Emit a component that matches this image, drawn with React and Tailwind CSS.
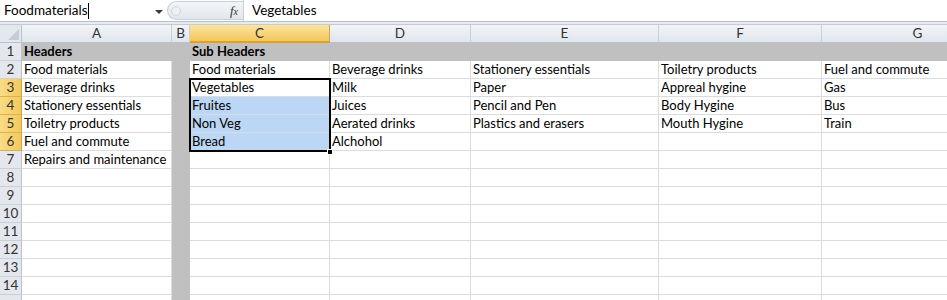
import React from "react";

const COLS = ["A", "B", "C", "D", "E", "F", "G"];

// sheet contents, row by row (A..G)
const DATA = [
  ["Headers", "", "Sub Headers", "", "", "", ""],
  ["Food materials", "", "Food materials", "Beverage drinks", "Stationery essentials", "Toiletry products", "Fuel and commute"],
  ["Beverage drinks", "", "Vegetables", "Milk", "Paper", "Appreal hygine", "Gas"],
  ["Stationery essentials", "", "Fruites", "Juices", "Pencil and Pen", "Body Hygine", "Bus"],
  ["Toiletry products", "", "Non Veg", "Aerated drinks", "Plastics and erasers", "Mouth Hygine", "Train"],
  ["Fuel and commute", "", "Bread", "Alchohol", "", "", ""],
  ["Repairs and maintenance", "", "", "", "", "", ""],
];

const ROW_COUNT = 15;

function cellClass(r, c) {
  // r is 1-based row, c is 0-based column index
  if (r === 1 || c === 1) return "bg-[#c0c0c0] border-[#c0c0c0]";
  if (c === 2 && r >= 4 && r <= 6) return "bg-[#bcd7f5] border-[#d4dde8]";
  return "bg-white border-[#dadcdd]";
}

export default function App() {
  const rows = Array.from({ length: ROW_COUNT }, (_, i) => i + 1);

  return (
    <div className="w-[947px] h-[300px] overflow-hidden bg-white text-[13px] text-black font-['Lato','Liberation_Sans',sans-serif]">
      {/* formula bar */}
      <div className="flex h-[22px] border-b border-[#b6bec9] bg-white">
        <div className="relative flex w-[167px] shrink-0 items-center pl-[4px] text-[13.5px]">
          <span>Foodmaterials</span>
          <span className="ml-px h-[16px] w-px bg-black" />
          <span className="absolute left-[155px] top-[10px] h-0 w-0 border-x-[4px] border-t-[4px] border-x-transparent border-t-[#3b3b3b]" />
        </div>
        <div className="my-px flex w-[76px] shrink-0 items-center rounded-l-full border border-r-0 border-[#c9cfd7] bg-gradient-to-b from-[#f3f5f8] to-[#e2e6eb] pl-[3px]">
          <span className="h-[10px] w-[10px] rounded-full border border-[#d3d7dd] bg-[#eef0f3]" />
          <span className="ml-auto mr-[5px] font-['Liberation_Serif',serif] text-[13px] italic text-[#333]">
            f<span className="text-[10px]">x</span>
          </span>
        </div>
        <div className="flex flex-1 items-center border-l border-[#c9cfd7] pl-[8px] text-[13.5px]">Vegetables</div>
      </div>
      <div className="h-[3px] border-b border-[#c4cbd4] bg-[#e8ecf0]" />

      {/* sheet */}
      <div className="relative">
        <div className="grid w-[1014px] grid-cols-[22px_150px_18px_140px_141px_188px_163px_192px] auto-rows-[18px]">
          {/* corner */}
          <div className="relative border-b border-r border-[#b9c2cd] bg-[#e4e8ee]">
            <svg className="absolute bottom-[2px] right-[2px]" width="11" height="11" viewBox="0 0 11 11">
              <path d="M11 0 L11 11 L0 11 Z" fill="#c7ccd4" />
            </svg>
          </div>
          {COLS.map((c) => (
            <div
              key={c}
              className={
                c === "C"
                  ? "flex items-center justify-center border-b-2 border-r border-b-[#e3a21a] border-r-[#d4a34a] bg-gradient-to-b from-[#fbe49f] to-[#f3c75a] text-[13.5px] text-[#333]"
                  : "flex items-center justify-center border-b border-r border-b-[#b9c2cd] border-r-[#c9d0d8] bg-gradient-to-b from-[#f2f4f7] to-[#e1e6ec] text-[13.5px] text-[#333]"
              }
            >
              {c}
            </div>
          ))}

          {rows.map((r) => (
            <React.Fragment key={r}>
              <div
                className={
                  r >= 3 && r <= 6
                    ? "flex items-center justify-center border-b border-r border-b-[#e0b14a] border-r-[#d9a43a] bg-gradient-to-r from-[#f9dc86] to-[#f3c95d] text-[13.5px] text-[#333]"
                    : "flex items-center justify-center border-b border-r border-b-[#c9d0d8] border-r-[#b9c2cd] bg-[#e4e8ee] text-[13.5px] text-[#333]"
                }
              >
                {r < ROW_COUNT ? r : ""}
              </div>
              {COLS.map((c, ci) => {
                const val = DATA[r - 1] ? DATA[r - 1][ci] : "";
                return (
                  <div
                    key={c}
                    className={`overflow-hidden whitespace-nowrap border-b border-r pl-[2px] leading-[17px] ${cellClass(r, ci)} ${r === 1 ? "font-bold" : ""}`}
                  >
                    {val}
                  </div>
                );
              })}
            </React.Fragment>
          ))}
        </div>

        {/* active selection C3:C6 */}
        <div className="pointer-events-none absolute left-[189px] top-[53px] h-[74px] w-[142px] border-2 border-black" />
        <div className="pointer-events-none absolute left-[327px] top-[124px] h-[6px] w-[6px] border border-white bg-black" />
      </div>
    </div>
  );
}
